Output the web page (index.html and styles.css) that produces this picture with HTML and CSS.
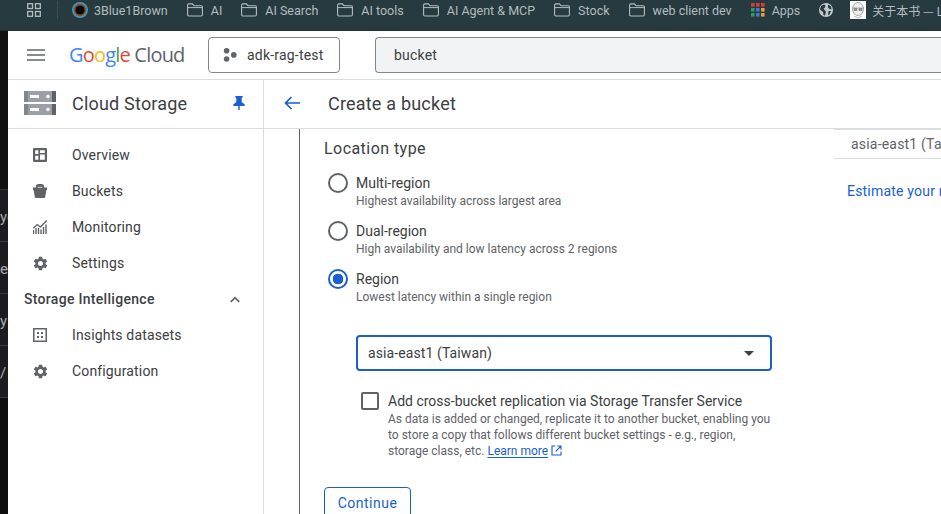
FILE: index.html
```html
<!DOCTYPE html>
<html lang="en">
<head>
<meta charset="utf-8">
<title>Create a bucket</title>
<link rel="stylesheet" href="styles.css">
</head>
<body>
<svg class="defs" width="0" height="0" aria-hidden="true">
  <symbol id="folder" viewBox="0 0 16 14"><path d="M.6 2.2c0-.8.5-1.3 1.2-1.3h3.6l1.6 1.8h7.3c.7 0 1.1.5 1.1 1.2v7.9c0 .7-.5 1.2-1.2 1.2H1.8c-.7 0-1.2-.5-1.2-1.2z" fill="none" stroke="#b4bcbf" stroke-width="1.1"/><path d="M1 4.6h14" stroke="#b4bcbf" stroke-width="1"/></symbol>
  <symbol id="gear" viewBox="0 0 24 24"><path fill="#5f6368" d="M19.14 12.94c.04-.3.06-.61.06-.94 0-.32-.02-.64-.07-.94l2.03-1.58c.18-.14.23-.41.12-.61l-1.92-3.32c-.12-.22-.37-.29-.59-.22l-2.39.96c-.5-.38-1.03-.7-1.62-.94l-.36-2.54c-.04-.24-.24-.41-.48-.41h-3.84c-.24 0-.43.17-.47.41l-.36 2.54c-.59.24-1.13.57-1.62.94l-2.39-.96c-.22-.08-.47 0-.59.22L2.74 8.87c-.12.21-.08.47.12.61l2.03 1.58c-.05.3-.09.63-.09.94s.02.64.07.94l-2.03 1.58c-.18.14-.23.41-.12.61l1.92 3.32c.12.22.37.29.59.22l2.39-.96c.5.38 1.03.7 1.62.94l.36 2.54c.05.24.24.41.48.41h3.84c.24 0 .44-.17.47-.41l.36-2.54c.59-.24 1.13-.56 1.62-.94l2.39.96c.22.08.47 0 .59-.22l1.92-3.32c.12-.22.07-.47-.12-.61l-2.01-1.58zM12 15.6c-1.98 0-3.6-1.62-3.6-3.6s1.62-3.6 3.6-3.6 3.6 1.62 3.6 3.6-1.62 3.6-3.6 3.6z"/></symbol>
</svg>

<header class="bookmarks">
  <svg class="bm-apps" width="14" height="14" viewBox="0 0 14 14"><g fill="none" stroke="#b4bcbf" stroke-width="1.3"><rect x=".7" y=".7" width="4.8" height="4.8"/><rect x="8.5" y=".7" width="4.8" height="4.8"/><rect x=".7" y="8.5" width="4.8" height="4.8"/><rect x="8.5" y="8.5" width="4.8" height="4.8"/></g></svg>
  <span class="bm-sep"></span>
  <a class="bm bm-first"><svg width="16" height="16" viewBox="0 0 16 16"><circle cx="8" cy="8" r="8" fill="#4a93b8"/><circle cx="8" cy="8" r="6.200" fill="#8a4f24"/><circle cx="8" cy="8" r="4.600" fill="#080808"/></svg><span>3Blue1Brown</span></a>
  <a class="bm"><svg class="fold" width="16" height="14"><use href="#folder"/></svg><span>AI</span></a>
  <a class="bm"><svg class="fold" width="16" height="14"><use href="#folder"/></svg><span>AI Search</span></a>
  <a class="bm"><svg class="fold" width="16" height="14"><use href="#folder"/></svg><span>AI tools</span></a>
  <a class="bm"><svg class="fold" width="16" height="14"><use href="#folder"/></svg><span>AI Agent &amp; MCP</span></a>
  <a class="bm"><svg class="fold" width="16" height="14"><use href="#folder"/></svg><span>Stock</span></a>
  <a class="bm"><svg class="fold" width="16" height="14"><use href="#folder"/></svg><span>web client dev</span></a>
  <a class="bm"><svg width="14" height="14" viewBox="0 0 14 14"><rect x="0" y="0" width="3.600" height="3.600" fill="#d93a3a"/><rect x="5" y="0" width="3.600" height="3.600" fill="#d93a3a"/><rect x="10" y="0" width="3.600" height="3.600" fill="#d93a3a"/><rect x="0" y="5" width="3.600" height="3.600" fill="#2f9e58"/><rect x="5" y="5" width="3.600" height="3.600" fill="#3b78d8"/><rect x="10" y="5" width="3.600" height="3.600" fill="#e8a02c"/><rect x="0" y="10" width="3.600" height="3.600" fill="#2f9e58"/><rect x="5" y="10" width="3.600" height="3.600" fill="#3b78d8"/><rect x="10" y="10" width="3.600" height="3.600" fill="#e8a02c"/></svg><span>Apps</span></a>
  <svg width="14" height="14" viewBox="0 0 14 14"><circle cx="7" cy="7" r="7" fill="#c3c9cb"/><path d="M2 3l3-1.500 1.500 1-.5 2-1.500 1 1.500 2 1 1.500-1 3.500-1.500-.5-.5-3-2-1.500L1 6zM9 1.500l3 2 .5 3-2-.5-1.500-1.500zM9.500 8h2.500l-1.500 3.500-1.500.5z" fill="#263a40"/></svg>
  <a class="bm bm-last"><svg width="16" height="18" viewBox="0 0 16 18"><rect width="16" height="18" fill="#fff"/><ellipse cx="8" cy="8" rx="5.500" ry="6.500" fill="#eee" stroke="#888" stroke-width=".7"/><path d="M2.500 7h11M4 7.500h3v2H4zM9 7.500h3v2H9z" fill="#999" stroke="#666" stroke-width=".5"/><path d="M4 15l4 2 4-2" fill="none" stroke="#999" stroke-width=".7"/></svg><span class="cjk">关于本书 — L</span></a>
</header>

<div class="window">
  <aside class="strip">
    <div class="strip-top"></div>
    <div class="strip-row">yo</div>
    <div class="strip-row">e</div>
    <div class="strip-row">y</div>
    <div class="strip-row">/</div>
    <div class="strip-end"></div>
  </aside>

  <div class="console">
    <div class="topbar">
      <svg class="menu" width="18" height="12" viewBox="0 0 18 12"><path d="M0 1h18M0 6h18M0 11h18" stroke="#5f6368" stroke-width="1.600"/></svg>
      <div class="logo"><span class="g-b">G</span><span class="g-r">o</span><span class="g-y">o</span><span class="g-b">g</span><span class="g-g">l</span><span class="g-r">e</span><span class="logo-cloud"> Cloud</span></div>
      <button class="project">
        <svg width="14" height="14" viewBox="0 0 14 14"><circle cx="3.600" cy="2.800" r="2.800" fill="#5f6368"/><circle cx="3.600" cy="11" r="2.800" fill="#5f6368"/><circle cx="10.800" cy="6.900" r="2.800" fill="#5f6368"/></svg>
        <span>adk-rag-test</span>
      </button>
      <div class="search">bucket</div>
    </div>

    <div class="body">
      <nav class="sidebar">
        <div class="side-head">
          <svg class="storage-icon" width="32" height="24" viewBox="0 0 32 24"><rect y="0" width="32" height="11" fill="#9aa0a6"/><rect y="13" width="32" height="11" fill="#9aa0a6"/><rect x="0" y="0" width="4" height="11" fill="#80868b"/><rect x="28" y="0" width="4" height="11" fill="#5f6368"/><rect x="0" y="13" width="4" height="11" fill="#80868b"/><rect x="28" y="13" width="4" height="11" fill="#5f6368"/><rect x="6" y="4" width="9" height="3" fill="#fff"/><rect x="6" y="17" width="9" height="3" fill="#fff"/><circle cx="24" cy="5.500" r="1.800" fill="#fff"/><circle cx="24" cy="18.500" r="1.800" fill="#fff"/></svg>
          <span class="side-title">Cloud Storage</span>
          <svg class="pin" width="12" height="14" viewBox="0 0 12 14"><path d="M2.300 0h7.400v1.300L8.700 2v4l3 2.500V10H6.700v4h-1.400v-4H.3V8.500l3-2.500V2l-1-.7z" fill="#1a5fd0"/></svg>
        </div>
        <ul class="nav-list">
          <li class="nav-item"><svg width="14" height="14" viewBox="0 0 14 14"><path fill-rule="evenodd" fill="#5f6368" d="M0 1a1 1 0 0 1 1-1h12a1 1 0 0 1 1 1v12a1 1 0 0 1-1 1H1a1 1 0 0 1-1-1zM2.200 2.200v3.900h3.200V2.200zM7 2.200v2.800h4.800V2.200zM7 6.500v5.300h4.800V6.500zM2.200 7.700v4.100h3.200V7.700z"/></svg><span>Overview</span></li>
          <li class="nav-item"><svg width="14" height="14" viewBox="0 0 14 14"><path fill="#5f6368" d="M2.800 3.500V2.700C2.800 1 4 0 5.500 0h3c1.500 0 2.700 1 2.700 2.700v.8H14v2.400h-.6L12.200 13a1.200 1.200 0 0 1-1.200 1H3a1.200 1.200 0 0 1-1.200-1L.6 5.900H0V3.500z"/><path d="M4.500 3.300h5" stroke="#fff" stroke-width=".7"/></svg><span>Buckets</span></li>
          <li class="nav-item"><svg width="14" height="14" viewBox="0 0 14 14"><path d="M0 8.300l4.300-3.800 3 2.500L13.800.5" fill="none" stroke="#5f6368" stroke-width="1.300"/><path d="M.5 10v4M3 8v6M5.500 8v6M8 9.500V14M10.500 7v7M13 4.500V14" stroke="#5f6368" stroke-width="1.400"/></svg><span>Monitoring</span></li>
          <li class="nav-item"><svg class="gear" width="17" height="17"><use href="#gear"/></svg><span>Settings</span></li>
          <li class="nav-section"><span>Storage Intelligence</span><svg width="10" height="7" viewBox="0 0 10 7"><path d="M.8 5.800L5 1.600l4.200 4.200" fill="none" stroke="#5f6368" stroke-width="1.700"/></svg></li>
          <li class="nav-item"><svg width="14" height="14" viewBox="0 0 14 14"><path fill-rule="evenodd" fill="#5f6368" d="M0 0h14v14H0zM1.500 1.500v11h11v-11zM4 4h2v2H4zM8 4h2v2H8zM4 8h2v2H4zM8 8h2v2H8z"/></svg><span>Insights datasets</span></li>
          <li class="nav-item"><svg class="gear" width="17" height="17"><use href="#gear"/></svg><span>Configuration</span></li>
        </ul>
      </nav>

      <main class="page">
        <div class="page-head">
          <svg width="16" height="14" viewBox="0 0 16 14"><path d="M16 7H1.800M7.500 1L1.500 7l6 6" fill="none" stroke="#1a5fd0" stroke-width="1.700"/></svg>
          <h1>Create a bucket</h1>
        </div>
        <div class="page-body">
          <section class="form">
            <h2>Location type</h2>
            <div class="radio-row">
              <span class="radio"></span>
              <div><div class="opt">Multi-region</div><div class="hint">Highest availability across largest area</div></div>
            </div>
            <div class="radio-row">
              <span class="radio"></span>
              <div><div class="opt">Dual-region</div><div class="hint">High availability and low latency across 2 regions</div></div>
            </div>
            <div class="radio-row">
              <span class="radio radio-on"></span>
              <div><div class="opt">Region</div><div class="hint">Lowest latency within a single region</div></div>
            </div>
            <div class="select"><span>asia-east1 (Taiwan)</span><span class="caret"></span></div>
            <div class="check-row">
              <span class="check"></span>
              <div>
                <div class="opt">Add cross-bucket replication via Storage Transfer Service</div>
                <div class="hint">As data is added or changed, replicate it to another bucket, enabling you to store a copy that follows different bucket settings - e.g., region, storage class, etc. <a class="learn">Learn more</a> <svg class="ext" width="11" height="11" viewBox="0 0 11 11"><path d="M4.500 1H1v9h9V6.500M6.300 1H10v3.700M10 1L4.700 6.300" fill="none" stroke="#1a5fd0" stroke-width="1.100"/></svg></div>
              </div>
            </div>
            <button class="continue">Continue</button>
          </section>
          <aside class="summary">
            <div class="summary-cell">asia-east1 (Taiwan)</div>
            <a class="estimate">Estimate your monthly cost</a>
          </aside>
        </div>
      </main>
    </div>
  </div>
</div>
</body>
</html>
```

FILE: styles.css
```css
* { box-sizing: border-box; }
html, body { margin: 0; height: 100%; overflow: hidden; }
body {
  width: 941px;
  height: 514px;
  font-family: Roboto, "Noto Sans CJK SC", sans-serif;
  color: #202124;
  background: #fff;
  display: flex;
  flex-direction: column;
}
.defs { position: absolute; }
ul { list-style: none; margin: 0; padding: 0; }
h1, h2 { margin: 0; font-weight: 400; }

/* bookmarks */
.bookmarks {
  height: 31px;
  flex: none;
  background: #263a40;
  border-bottom: 1px solid #1f2f34;
  display: flex;
  align-items: center;
  padding: 0 0 10px 27px;
  gap: 19px;
  color: #b4bcbf;
  font-size: 12.5px;
  white-space: nowrap;
  overflow: hidden;
}
.bookmarks > * { flex: none; }
.bm svg { flex: none; }
.bm-apps { margin-right: -3px; }
.bm-sep { width: 1px; height: 18px; background: #3b4d53; margin-right: -5px; }
.bm { display: flex; align-items: center; gap: 7px; }
.bm-first { gap: 6px; }
.bm .fold { margin-right: 1px; }
.bm-last { margin-left: -2px; gap: 6px; }
.cjk { font-family: "Noto Sans CJK SC", sans-serif; font-size: 12px; }

/* window */
.window { flex: 1; display: flex; min-height: 0; }
.strip {
  width: 8px;
  flex: none;
  background: #111;
  color: #a9a9ab;
  font-size: 15px;
  overflow: hidden;
  display: flex;
  flex-direction: column;
}
.strip-top { height: 159px; flex: none; border-bottom: 1px solid #333; }
.strip-row {
  height: 52px;
  flex: none;
  background: #1c1c1e;
  border-bottom: 1px solid #3a3a3c;
  display: flex;
  align-items: center;
  padding-top: 2px;
  white-space: nowrap;
}
.strip-end { flex: 1; background: #0e0e0e; }

.console { flex: 1; min-width: 0; display: flex; flex-direction: column; }
.topbar {
  height: 49px;
  flex: none;
  border-bottom: 1px solid #dadce0;
  display: flex;
  align-items: center;
  padding-left: 19px;
}
.menu { flex: none; }
.logo {
  margin: -2px 0 0 24px;
  width: 116px;
  flex: none;
  font-family: "Open Sans", sans-serif;
  font-size: 20px;
  letter-spacing: -.8px;
  white-space: pre;
}
.g-b { color: #4285f4; }
.g-r { color: #ea4335; }
.g-y { color: #fbbc04; }
.g-g { color: #34a853; }
.logo-cloud { color: #5f6368; }
.project {
  margin: -1px 0 0 23px;
  width: 132px;
  height: 36px;
  flex: none;
  border: 1px solid #80868b;
  border-radius: 4px;
  background: #fff;
  display: flex;
  align-items: center;
  gap: 10px;
  padding: 0 0 0 14px;
  font: 14px Roboto, sans-serif;
  letter-spacing: .2px;
  color: #3c4043;
}
.search {
  margin: -1px 0 0 35px;
  flex: 1;
  height: 36px;
  background: #f1f3f4;
  border: 1px solid #80868b;
  border-right: 0;
  border-radius: 4px 0 0 4px;
  padding-left: 18px;
  display: flex;
  align-items: center;
  font-size: 14px;
  letter-spacing: .2px;
  color: #3c4043;
}

.body { flex: 1; min-height: 0; display: flex; }
.sidebar { width: 256px; flex: none; border-right: 1px solid #dadce0; }
.side-head {
  height: 49px;
  border-bottom: 1px solid #dadce0;
  display: flex;
  align-items: center;
  padding: 0 0 2px 16px;
}
.storage-icon { flex: none; }
.side-title { margin-left: 16px; font-size: 18px; letter-spacing: .2px; color: #3c4043; }
.pin { margin-left: 46px; flex: none; }
.nav-list { padding-top: 8px; }
.nav-item {
  height: 36px;
  display: flex;
  align-items: center;
  padding-left: 25px;
  gap: 25px;
  font-size: 14px;
  letter-spacing: .15px;
  color: #3c4043;
}
.nav-item .gear { margin: 0 -2px 0 -1px; }
.nav-section {
  height: 36px;
  display: flex;
  align-items: center;
  justify-content: space-between;
  padding: 0 23px 0 16px;
  font-size: 14px;
  font-weight: 500;
  letter-spacing: .3px;
  color: #3c4043;
}

.page { flex: 1; min-width: 0; display: flex; flex-direction: column; }
.page-head {
  height: 49px;
  flex: none;
  border-bottom: 1px solid #dadce0;
  display: flex;
  align-items: center;
  padding: 0 0 2px 20px;
  gap: 28px;
}
.page-head h1 { font-size: 18px; letter-spacing: .2px; color: #3c4043; }
.page-body { flex: 1; min-height: 0; display: flex; overflow: hidden; }
.form {
  margin-left: 35px;
  width: 535px;
  flex: none;
  border-left: 1px solid #5f6368;
  padding: 10px 0 0 24px;
}
.form h2 { font-size: 16px; line-height: 19px; letter-spacing: .45px; color: #3c4043; margin-bottom: 15px; }
.radio-row { height: 48px; display: flex; align-items: flex-start; padding-left: 4px; gap: 8px; }
.radio {
  width: 20px;
  height: 20px;
  flex: none;
  border: 2px solid #5f6368;
  border-radius: 50%;
}
.radio-on {
  border-color: #1a5fd0;
  background: radial-gradient(circle, #1a5fd0 0 5px, #fff 5.6px);
}
.opt { font-size: 14px; line-height: 20px; color: #3c4043; }
.hint { font-size: 12px; line-height: 16px; color: #5f6368; }
.select {
  margin: 18px 0 0 32px;
  width: 416px;
  height: 36px;
  border: 2px solid #1a5fd0;
  border-radius: 4px;
  display: flex;
  align-items: center;
  justify-content: space-between;
  padding: 0 16px 0 10px;
  font-size: 14px;
  letter-spacing: .1px;
  color: #3c4043;
}
.caret {
  width: 0;
  height: 0;
  border-left: 5px solid transparent;
  border-right: 5px solid transparent;
  border-top: 5px solid #3c4043;
}
.check-row { margin: 20px 0 0 37px; width: 412px; display: flex; gap: 9px; }
.check {
  width: 18px;
  height: 18px;
  margin-top: 1px;
  flex: none;
  border: 2px solid #5f6368;
  border-radius: 2px;
}
.learn { color: #1a5fd0; text-decoration: underline; text-underline-offset: 2px; }
.ext { vertical-align: -1px; }
.continue {
  margin-top: 28px;
  display: block;
  width: 87px;
  height: 32px;
  border: 1px solid #1a5fd0;
  border-radius: 4px;
  background: #fff;
  color: #1a5fd0;
  font: 14px Roboto, sans-serif;
  letter-spacing: .5px;
  padding: 0;
}
.summary { flex: none; width: 300px; border-top: 2px solid #dadce0; margin-top: -1px; }
.summary-cell {
  height: 29px;
  padding-left: 17px;
  display: flex;
  align-items: center;
  border-bottom: 1px solid #dadce0;
  font-size: 14px;
  letter-spacing: .2px;
  color: #5f6368;
  white-space: nowrap;
}
.estimate {
  display: block;
  margin: 22px 0 0 13px;
  font-size: 14px;
  line-height: 20px;
  letter-spacing: .2px;
  color: #1a5fd0;
  white-space: nowrap;
}
```
